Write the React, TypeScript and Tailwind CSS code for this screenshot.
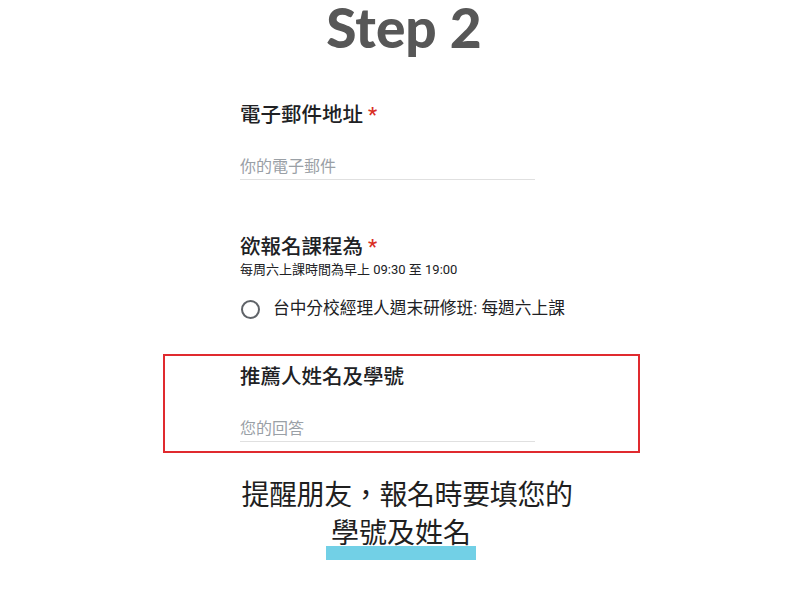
export default function App() {
  const cjk = "font-['Roboto','Noto_Sans_CJK_TC',sans-serif]";
  return (
    <div className={`min-h-[600px] w-full bg-white ${cjk}`}>
      <h1 className="pl-[8px] text-center font-['Lato',sans-serif] text-[55px] font-black leading-none text-[#575757]">
        Step 2
      </h1>

      <div className="ml-[163px] w-[477px]">
        {/* email */}
        <div className="pl-[77px]">
          <div className="mt-[45px] text-[20.5px] font-medium leading-[30px] text-[#202124]">
            電子郵件地址 <span className="text-[#d93025]">*</span>
          </div>
          <div className="mt-[25px] w-[295px] border-b border-[#e0e0e0] text-[16px] leading-[24px] text-[#9aa0a6]">
            你的電子郵件
          </div>

          {/* course */}
          <div className="mt-[54px] text-[20.5px] font-medium leading-[26px] text-[#202124]">
            欲報名課程為 <span className="text-[#d93025]">*</span>
          </div>
          <div className="mt-[1px] text-[13px] leading-[18px] text-[#202124]">
            每周六上課時間為早上 09:30 至 19:00
          </div>
          <div className="mt-[18px] flex h-[24px] items-center gap-[13px]">
            <span className="ml-[1px] h-[19px] w-[19px] shrink-0 rounded-full border-2 border-[#5f6368]" />
            <span className="text-[16.7px] leading-[24px] text-[#202124]">
              台中分校經理人週末研修班: 每週六上課
            </span>
          </div>
        </div>

        {/* highlighted referrer field */}
        <div className="mt-[33px] border-2 border-[#e02a2f] pb-[9px] pl-[75px] pt-[6px]">
          <div className="text-[20.5px] font-medium leading-[30px] text-[#202124]">
            推薦人姓名及學號
          </div>
          <div className="mt-[25px] w-[295px] border-b border-[#e0e0e0] text-[16px] leading-[24px] text-[#9aa0a6]">
            您的回答
          </div>
        </div>
      </div>

      <div className="mt-[24px] text-center text-[28px] leading-[38px] text-[#1f1f1f]">
        <div className="pl-[14px] tracking-[-0.4px]">提醒朋友，報名時要填您的</div>
        <div className="pl-[2px]">
          <span className="inline-block h-[46px] bg-[linear-gradient(to_bottom,transparent_31px,#72d0e6_31px,#72d0e6_45px,transparent_45px)] px-[5px]">
            學號及姓名
          </span>
        </div>
      </div>
    </div>
  );
}
